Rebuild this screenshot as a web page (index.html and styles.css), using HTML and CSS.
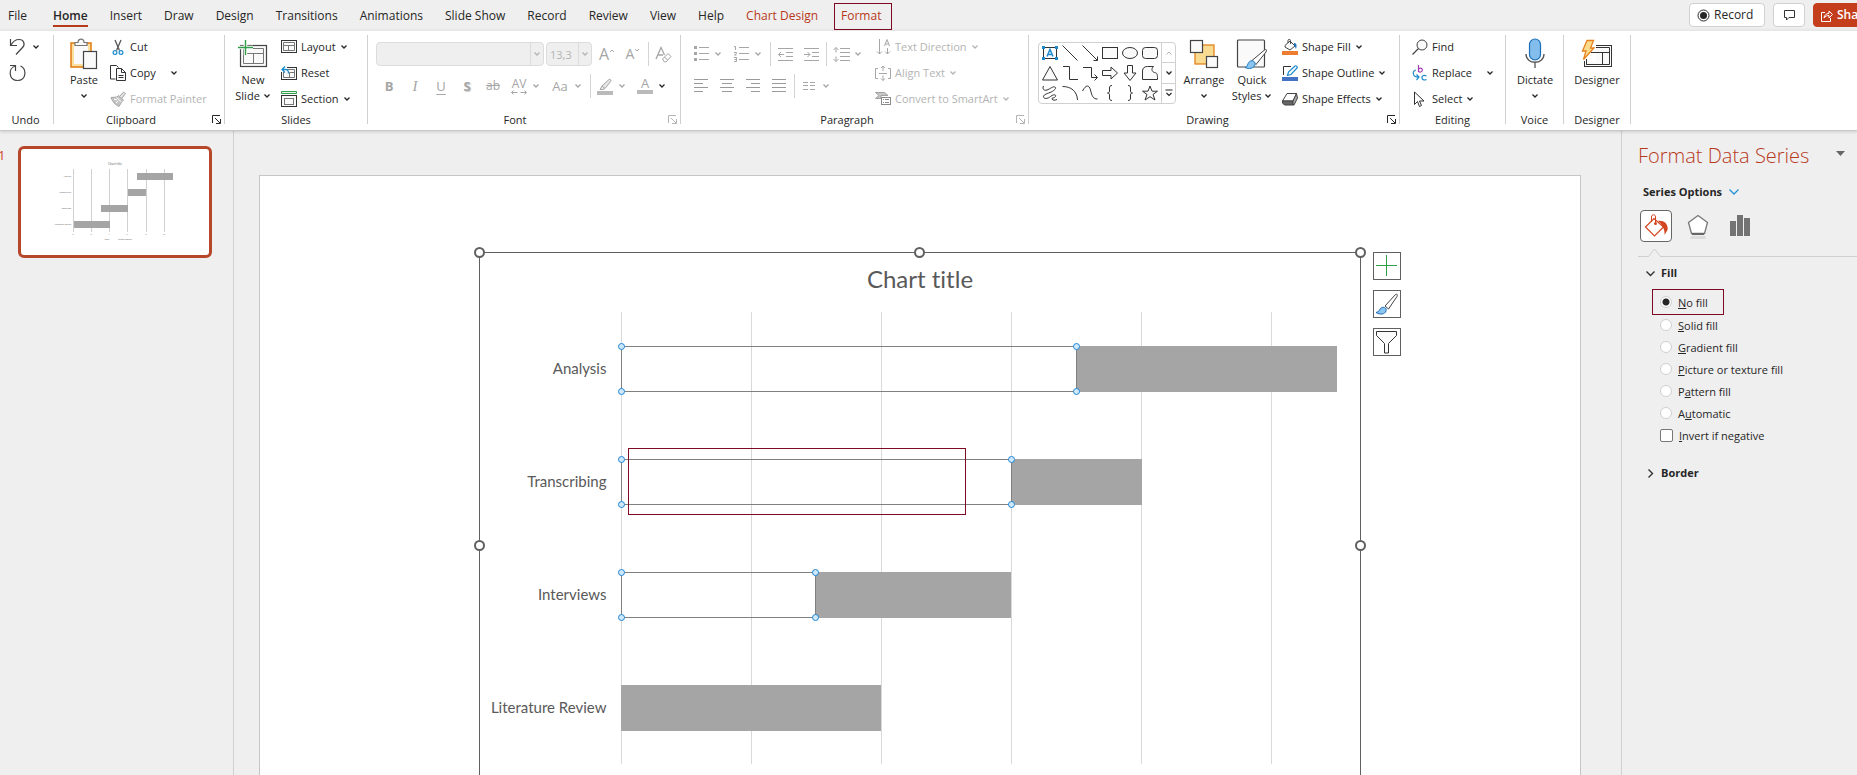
FILE: index.html
```html
<!DOCTYPE html>
<html lang="en">
<head>
    <meta charset="UTF-8">
    <meta name="viewport" content="width=device-width, initial-scale=1.0">
    <title>Presentation Editor</title>
    <link rel="stylesheet" href="styles.css">
</head>
<body>
    <!-- Shared symbols -->
    <svg class="symbols" aria-hidden="true">
        <symbol id="chev" viewBox="0 0 8 8"><path d="M1.5 2.5 4 5l2.5-2.5" fill="none" stroke="currentColor" stroke-width="1.3"/></symbol>
        <symbol id="launch" viewBox="0 0 9 9"><path d="M.5 8V.5H8M3 3l5 5M8.500 4v4.500H4" fill="none" stroke="currentColor"/></symbol>
    </svg>

    <!-- Tabs -->
    <header class="tab-bar">
        <nav class="tabs">
            <a href="#" class="tab tab-file">File</a>
            <a href="#" class="tab active">Home</a>
            <a href="#" class="tab">Insert</a>
            <a href="#" class="tab">Draw</a>
            <a href="#" class="tab">Design</a>
            <a href="#" class="tab">Transitions</a>
            <a href="#" class="tab">Animations</a>
            <a href="#" class="tab">Slide Show</a>
            <a href="#" class="tab">Record</a>
            <a href="#" class="tab">Review</a>
            <a href="#" class="tab">View</a>
            <a href="#" class="tab">Help</a>
            <a href="#" class="tab context">Chart Design</a>
            <a href="#" class="tab context marked">Format</a>
        </nav>
        <div class="window-actions">
            <button class="action-btn record-btn">
                <svg width="13" height="13" viewBox="0 0 13 13"><circle cx="6.500" cy="6.500" r="5.500" fill="none" stroke="#262626"/><circle cx="6.500" cy="6.500" r="3.500" fill="#262626"/></svg>
                Record
            </button>
            <button class="action-btn comment-btn" aria-label="Comments">
                <svg width="13" height="12" viewBox="0 0 13 12"><path d="M1.500 1.500h10v7H6L3.500 11V8.500h-2z" fill="none" stroke="#333"/></svg>
            </button>
            <button class="action-btn share-btn">
                <svg width="12" height="13" viewBox="0 0 12 13"><path d="M4 3.500H.5v9h9V9M3 9c.5-3 2-4.500 5-4.500V2l3.500 3.500L8 9V6.500C6 6.500 4.500 7 3 9z" fill="none" stroke="#fff"/></svg>
                Share
            </button>
        </div>
    </header>

    <!-- Ribbon -->
    <div class="ribbon">
        <section class="group group-undo">
            <div class="group-body">
                <div class="stack">
                    <button class="item" aria-label="Undo">
                        <svg width="17" height="18" viewBox="0 0 17 18"><path d="M1.500 1v6.500H8M2 7c2-3.500 4.500-5.500 8-5.500 5 0 6.500 5 3.500 8L7 16.500" fill="none" stroke="#444" stroke-width="1.200"/></svg>
                        <svg class="chev"><use href="#chev"/></svg>
                    </button>
                    <button class="item" aria-label="Repeat">
                        <svg width="17" height="18" viewBox="0 0 17 18"><path d="M1 1.500h5.500V7M6 2C-1 4.500-.5 16.500 8.500 16.500S18 5 11.500 2" fill="none" stroke="#444" stroke-width="1.200"/></svg>
                    </button>
                </div>
            </div>
            <h2 class="group-title">Undo</h2>
        </section>

        <section class="group group-clipboard">
            <div class="group-body">
                <button class="big">
                    <svg width="28" height="32" viewBox="0 0 28 32"><rect x="1" y="5" width="20" height="24" fill="#fbe0a0" stroke="#e07a10" stroke-width="1.500"/><rect x="4" y="8" width="14" height="18" fill="#fafafa"/><path d="M5 7.500V4.500h3C8 0 14 0 14 4.500h3v3z" fill="#fafafa" stroke="#777" stroke-width="1.200"/><rect x="13.500" y="13.500" width="13" height="17" fill="#fafafa" stroke="#444" stroke-width="1.200"/></svg>
                    <span>Paste</span>
                    <svg class="chev"><use href="#chev"/></svg>
                </button>
                <div class="stack">
                    <button class="item">
                        <svg width="16" height="16" viewBox="0 0 16 16"><path d="M5 1l4.500 10.500M11 1 6.500 11.500" fill="none" stroke="#555" stroke-width="1.300"/><circle cx="5" cy="13.500" r="1.900" fill="#fff" stroke="#1e8bcd" stroke-width="1.200"/><circle cx="11" cy="13.500" r="1.900" fill="#fff" stroke="#1e8bcd" stroke-width="1.200"/></svg>
                        Cut
                    </button>
                    <button class="item copy-btn">
                        <svg width="16" height="16" viewBox="0 0 16 16"><path d="M5.500 14H.5V.5h6l2 2" fill="none" stroke="#333"/><path d="M6.500 3.500h5l4 4v8h-9zM11.500 3.500v4h4M8.500 10.500h5M8.500 12.500h5" fill="#fafafa" stroke="#333"/></svg>
                        Copy
                        <svg class="chev"><use href="#chev"/></svg>
                    </button>
                    <button class="item" disabled>
                        <svg width="16" height="16" viewBox="0 0 16 16"><path d="M10 5l3.500-4 2 1.500L12 7" fill="#e3e3e3" stroke="#a6a6a6"/><path d="M1 6.500l6-.5 1.500-1.500 5 4.500-1.500 1.500-3 5C5 14 2.500 10.500 1 6.500z" fill="#c4c4c4" stroke="#a6a6a6"/><path d="M6.500 6.500l5 4.500M4 8l3 1M6 12l2-2" stroke="#fff"/></svg>
                        Format Painter
                    </button>
                </div>
            </div>
            <h2 class="group-title">Clipboard</h2>
            <button class="launcher" aria-label="Clipboard options"><svg><use href="#launch"/></svg></button>
        </section>

        <section class="group group-slides">
            <div class="group-body">
                <button class="big">
                    <svg width="32" height="30" viewBox="0 0 32 30"><rect x="3.500" y="6.500" width="26" height="21" fill="#fafafa" stroke="#444" stroke-width="1.200"/><path d="M6.500 9.500h20v15h-20zM6.500 14.500h20M16.500 14.500v10" fill="none" stroke="#777"/><path d="M1 8.500h15M8.500 1v15" stroke="#fff" stroke-width="3.500"/><path d="M1 8.500h15M8.500 1v15" stroke="#2f9e4b" stroke-width="1.400"/></svg>
                    <span>New<br>Slide <svg class="chev"><use href="#chev"/></svg></span>
                </button>
                <div class="stack">
                    <button class="item">
                        <svg width="16" height="14" viewBox="0 0 16 14"><rect x=".5" y=".5" width="15" height="12" fill="#fafafa" stroke="#333"/><path d="M2.500 2.500h11v8h-11zM2.500 5.500h11M7.500 5.500v5" fill="none" stroke="#777"/></svg>
                        Layout
                        <svg class="chev"><use href="#chev"/></svg>
                    </button>
                    <button class="item">
                        <svg width="16" height="14" viewBox="0 0 16 14"><rect x=".5" y="1.500" width="15" height="12" fill="#fafafa" stroke="#333"/><path d="M2.500 3.500h11v8h-11zM8.500 6.500h5M8.500 6.500v5" fill="none" stroke="#777"/><path d="M0 0h6v6H0z" fill="#fff"/><path d="M4 .5 1 3.500l3 3M1 3.500h3.500c2.500 0 3 1.500 3 4" fill="none" stroke="#1e8bcd" stroke-width="1.300"/></svg>
                        Reset
                    </button>
                    <button class="item">
                        <svg width="16" height="16" viewBox="0 0 16 16"><path d="M.5.5h15v2H.5z" fill="#eaf7ec" stroke="#2f9e4b"/><rect x=".5" y="4.500" width="15" height="11" fill="#fafafa" stroke="#333"/><rect x="3.500" y="7.500" width="9" height="6" fill="none" stroke="#777"/></svg>
                        Section
                        <svg class="chev"><use href="#chev"/></svg>
                    </button>
                </div>
            </div>
            <h2 class="group-title">Slides</h2>
        </section>

        <section class="group group-font">
            <div class="tool-rows">
                <div class="tool-row">
                    <div class="combo font-name"><input type="text" aria-label="Font name" disabled><svg class="chev"><use href="#chev"/></svg></div>
                    <div class="combo font-size"><input type="text" aria-label="Font size" value="13,3" disabled><svg class="chev"><use href="#chev"/></svg></div>
                    <button class="tool grow" aria-label="Increase font size" disabled>A<svg width="6" height="12" viewBox="0 0 6 12"><path d="M1 4l2-2 2 2" fill="none" stroke="#a6a6a6"/></svg></button>
                    <button class="tool shrink" aria-label="Decrease font size" disabled>A<svg width="6" height="12" viewBox="0 0 6 12"><path d="M1 1l2 2 2-2" fill="none" stroke="#a6a6a6"/></svg></button>
                    <span class="sep"></span>
                    <button class="tool" aria-label="Clear formatting" disabled><svg width="17" height="17" viewBox="0 0 17 17"><path d="M1 13 6 1.500 9.500 9M2.700 9H8" fill="none" stroke="#a6a6a6" stroke-width="1.300"/><path d="M7.500 13 13 7.500l3 3L11 16H9.500zM9.500 11l3 3" fill="#fff" stroke="#a6a6a6"/></svg></button>
                </div>
                <div class="tool-row">
                    <button class="tool bold" disabled>B</button>
                    <button class="tool italic" disabled>I</button>
                    <button class="tool underline" disabled>U</button>
                    <button class="tool shadow" disabled>S</button>
                    <button class="tool strike" disabled>ab</button>
                    <button class="tool spacing" disabled>AV<svg width="16" height="5" viewBox="0 0 16 5"><path d="M2.500.5l-2 2 2 2M.5 2.500h6M13.500.5l2 2-2 2M15.500 2.500h-6" fill="none" stroke="#a6a6a6"/></svg></button>
                    <svg class="chev muted"><use href="#chev"/></svg>
                    <button class="tool case" disabled>Aa</button>
                    <svg class="chev muted"><use href="#chev"/></svg>
                    <span class="sep"></span>
                    <button class="tool" aria-label="Highlight colour" disabled><svg width="16" height="17" viewBox="0 0 16 17"><path d="M5 8l7-6.500c1-.8 2.500.5 1.800 1.700L8 10.500zM5 8l-2 3.500h3l2-1" fill="#e6e6e6" stroke="#a6a6a6"/><path d="M0 13h16v4H0z" fill="#bababa"/></svg></button>
                    <svg class="chev muted"><use href="#chev"/></svg>
                    <button class="tool colour" disabled>A</button>
                    <svg class="chev"><use href="#chev"/></svg>
                </div>
            </div>
            <h2 class="group-title">Font</h2>
            <button class="launcher" aria-label="Font options" disabled><svg><use href="#launch"/></svg></button>
        </section>

        <section class="group group-paragraph">
            <div class="group-body">
                <div class="tool-rows">
                    <div class="tool-row">
                        <button class="tool" aria-label="Bullets" disabled><svg width="15" height="16" viewBox="0 0 15 16"><path d="M0 0h3v3H0zM0 6h3v3H0zM0 12h3v3H0z" fill="#a6a6a6"/><path d="M5 1.500h10M5 7.500h10M5 13.500h10" stroke="#a6a6a6"/></svg></button>
                        <svg class="chev muted"><use href="#chev"/></svg>
                        <button class="tool" aria-label="Numbering" disabled><svg width="15" height="16" viewBox="0 0 15 16"><path d="M0 .5h1.500V4M0 6.500h2.500v1L.5 9h2M0 11.500h2.500v4H0M.5 13.500h2" fill="none" stroke="#a6a6a6"/><path d="M5 1.500h10M5 7.500h10M5 13.500h10" stroke="#a6a6a6"/></svg></button>
                        <svg class="chev muted"><use href="#chev"/></svg>
                        <span class="sep"></span>
                        <button class="tool" aria-label="Decrease indent" disabled><svg width="15" height="15" viewBox="0 0 15 15"><path d="M0 1.500h15M8 5.500h7M8 9.500h7M0 13.500h15M3 5 .5 7.500 3 10M.5 7.500h5.500" fill="none" stroke="#a6a6a6"/></svg></button>
                        <button class="tool" aria-label="Increase indent" disabled><svg width="15" height="15" viewBox="0 0 15 15"><path d="M0 1.500h15M8 5.500h7M8 9.500h7M0 13.500h15M3.500 5 6 7.500 3.500 10M0 7.500h6" fill="none" stroke="#a6a6a6"/></svg></button>
                        <span class="sep"></span>
                        <button class="tool" aria-label="Line spacing" disabled><svg width="17" height="15" viewBox="0 0 17 15"><path d="M7 1.500h10M7 5.500h10M7 9.500h10M7 13.500h10M.5 3 3 .5 5.500 3M3 .5v5M.5 12 3 14.500 5.500 12M3 14.500v-5" fill="none" stroke="#a6a6a6"/></svg></button>
                        <svg class="chev muted"><use href="#chev"/></svg>
                    </div>
                    <div class="tool-row">
                        <button class="tool" aria-label="Align left" disabled><svg width="14" height="14" viewBox="0 0 14 14"><path d="M0 .5h14M0 4.500h9M0 8.500h14M0 12.500h9" stroke="#9a9a9a"/></svg></button>
                        <button class="tool" aria-label="Centre" disabled><svg width="14" height="14" viewBox="0 0 14 14"><path d="M0 .5h14M2 4.500h10M0 8.500h14M2 12.500h10" stroke="#9a9a9a"/></svg></button>
                        <button class="tool" aria-label="Align right" disabled><svg width="14" height="14" viewBox="0 0 14 14"><path d="M0 .5h14M5 4.500h9M0 8.500h14M5 12.500h9" stroke="#9a9a9a"/></svg></button>
                        <button class="tool" aria-label="Justify" disabled><svg width="14" height="14" viewBox="0 0 14 14"><path d="M0 .5h14M0 4.500h14M0 8.500h14M0 12.500h14" stroke="#9a9a9a"/></svg></button>
                        <span class="sep"></span>
                        <button class="tool" aria-label="Columns" disabled><svg width="12" height="14" viewBox="0 0 12 14"><path d="M0 3.500h5M7 3.500h5M0 6.500h5M7 6.500h5M0 10.500h5M7 10.500h5" stroke="#a6a6a6"/></svg></button>
                        <svg class="chev muted"><use href="#chev"/></svg>
                    </div>
                </div>
                <div class="stack">
                    <button class="item" disabled>
                        <svg width="16" height="18" viewBox="0 0 16 18"><path d="M4.500 1v15M2 13.500 4.500 16 7 13.500M12.500 10v6M10 13.500l2.500 2.500 2.500-2.500M9.500 8l2.500-6.500L14.500 8M10.300 6h3.500" fill="none" stroke="#a6a6a6"/></svg>
                        Text Direction
                        <svg class="chev"><use href="#chev"/></svg>
                    </button>
                    <button class="item" disabled>
                        <svg width="16" height="16" viewBox="0 0 16 16"><path d="M3 3.500H.5v10H3M13 3.500h2.500v10H13M4 8.500h8M8 1v5M6 3l2-2 2 2M8 15.500v-5M6 13.500l2 2 2-2" fill="none" stroke="#a6a6a6"/></svg>
                        Align Text
                        <svg class="chev"><use href="#chev"/></svg>
                    </button>
                    <button class="item" disabled>
                        <svg width="16" height="16" viewBox="0 0 16 16"><path d="M.5 1.500h9l3.500 3H6v3H.5L4 4.500z" fill="#c8c8c8" stroke="#a0a0a0"/><rect x="6.500" y="6.500" width="9" height="7" fill="#fff" stroke="#8a8a8a"/><path d="M8 8.500h1M10 8.500h4M8 11.500h1M10 11.500h4" stroke="#8a8a8a"/></svg>
                        Convert to SmartArt
                        <svg class="chev"><use href="#chev"/></svg>
                    </button>
                </div>
            </div>
            <h2 class="group-title">Paragraph</h2>
            <button class="launcher" aria-label="Paragraph options" disabled><svg><use href="#launch"/></svg></button>
        </section>

        <section class="group group-drawing">
            <div class="group-body">
                <div class="gallery">
                    <div class="shapes">
                        <svg viewBox="0 0 16 16"><rect x="1.500" y="2.500" width="13" height="11" fill="#fff" stroke="#333"/><path d="M0 1h3v3H0zM13 1h3v3h-3zM0 12h3v3H0zM13 12h3v3h-3z" fill="#1e8bcd"/><path d="M5 11.500 8 4.500l3 7M6 9.500h4" fill="none" stroke="#1e8bcd" stroke-width="1.500"/></svg>
                        <svg viewBox="0 0 16 16"><path d="M.5.500l15 15" stroke="#333"/></svg>
                        <svg viewBox="0 0 16 16"><path d="M.5.500l15 15M15.500 11.500v4h-4" fill="none" stroke="#333"/></svg>
                        <svg viewBox="0 0 16 16"><rect x=".5" y="2.500" width="15" height="11" fill="#fafafa" stroke="#333"/></svg>
                        <svg viewBox="0 0 16 16"><ellipse cx="8" cy="8" rx="7.500" ry="5.500" fill="#fafafa" stroke="#333"/></svg>
                        <svg viewBox="0 0 16 16"><rect x=".5" y="2.500" width="15" height="11" rx="3" fill="#fafafa" stroke="#333"/></svg>
                        <svg viewBox="0 0 16 16"><path d="M8 1.500 15.500 15H.5z" fill="#fafafa" stroke="#333"/></svg>
                        <svg viewBox="0 0 16 16"><path d="M1 1.500h6.500v13H16" fill="none" stroke="#333"/></svg>
                        <svg viewBox="0 0 16 16"><path d="M1 2.500h8.500v10H15M12.500 9.500l3 3-3 3" fill="none" stroke="#333"/></svg>
                        <svg viewBox="0 0 16 16"><path d="M.5 5.500H9v-3.500l6.500 6-6.500 6v-3.500H.5z" fill="#fafafa" stroke="#333"/></svg>
                        <svg viewBox="0 0 16 16"><path d="M5.500.5h5V8h3.500l-6 7.500L2 8h3.500z" fill="#fafafa" stroke="#333"/></svg>
                        <svg viewBox="0 0 16 16"><path d="M.5 14.500V6c0-3 2-4.500 5-4.500h6c-3 3-1 5.500 1 6 3 .5 3 2 3 7z" fill="#fafafa" stroke="#333"/></svg>
                        <svg viewBox="0 0 16 16"><path d="M1.500 1C0 4 2 6 5 5s6-4 8-3-1 4-5 5.500S1 10 1.500 12s4 2 7-.5 6-2 5 0-4 1-3.500 2.500 3 1.500 5 .5" fill="none" stroke="#333"/></svg>
                        <svg viewBox="0 0 16 16"><path d="M.5 1.500C9 1.500 15 6 15.500 15" fill="none" stroke="#333"/></svg>
                        <svg viewBox="0 0 16 16"><path d="M.5 6C4-.5 7-.5 8.500 5c1.500 6 2.500 9 7 9" fill="none" stroke="#333"/></svg>
                        <svg viewBox="0 0 16 16"><path d="M10 .5c-2 0-2.500 1-2.500 2.500V6c0 1.300-.5 2-2 2 1.500 0 2 .7 2 2v3c0 1.500.5 2.500 2.500 2.500" fill="none" stroke="#333"/></svg>
                        <svg viewBox="0 0 16 16"><path d="M6 .5c2 0 2.500 1 2.500 2.500V6c0 1.300.5 2 2 2-1.500 0-2 .7-2 2v3c0 1.500-.5 2.500-2.500 2.500" fill="none" stroke="#333"/></svg>
                        <svg viewBox="0 0 16 16"><path d="M8 1l2 5.200h5.500L11 9.500l2 5.500-5-3.300L3 15l2-5.500L.5 6.200H6z" fill="#fafafa" stroke="#333"/></svg>
                    </div>
                    <div class="gallery-scroll">
                        <button aria-label="Previous row" disabled><svg width="8" height="8" viewBox="0 0 8 8"><path d="M1.500 5.500 4 3l2.500 2.500" fill="none" stroke="currentColor"/></svg></button>
                        <button aria-label="Next row"><svg class="chev"><use href="#chev"/></svg></button>
                        <button aria-label="More shapes"><svg width="8" height="8" viewBox="0 0 8 8"><path d="M.5 1h7M1.500 4 4 6.500 6.500 4" fill="none" stroke="currentColor" stroke-width="1.200"/></svg></button>
                    </div>
                </div>
                <button class="big">
                    <svg width="30" height="30" viewBox="0 0 30 30"><rect x="6" y="6" width="19" height="19" fill="#f9dc92" stroke="#e07a10" stroke-width="1.200"/><rect x="1.500" y="1.500" width="12" height="12" fill="#fafafa" stroke="#444" stroke-width="1.200"/><rect x="17.500" y="17.500" width="11" height="11" fill="#fafafa" stroke="#444" stroke-width="1.200"/></svg>
                    <span>Arrange</span>
                    <svg class="chev"><use href="#chev"/></svg>
                </button>
                <button class="big">
                    <svg width="32" height="31" viewBox="0 0 32 31"><rect x="1.500" y="1.500" width="27" height="27" rx="1" fill="#fafafa" stroke="#444" stroke-width="1.200"/><path d="M16 22 28.500 11.500c2-1 2.500 0 1.500 2L20 26z" fill="#fff" stroke="#444"/><path d="M9 29c3 0 2-5 5.500-6.500 2.500-1 5 1 4.500 3.500C18 30 13 31 9 29z" fill="#8cc4f0" stroke="#1e78bd"/></svg>
                    <span>Quick<br>Styles <svg class="chev"><use href="#chev"/></svg></span>
                </button>
                <div class="stack">
                    <button class="item">
                        <svg width="16" height="16" viewBox="0 0 16 16"><path d="M3 6.500 8 2l5 5-5 4-5-3zM6 4V1.500c0-1.500 2.500-1.500 2.500 0V5" fill="#fafafa" stroke="#444"/><path d="M12 4c3 0 3 3 2 6-1-2-1-3-2-4z" fill="#1e78bd"/><path d="M0 12h16v4H0z" fill="#ed7d31"/></svg>
                        Shape Fill
                        <svg class="chev"><use href="#chev"/></svg>
                    </button>
                    <button class="item">
                        <svg width="16" height="16" viewBox="0 0 16 16"><path d="M9 1.500H1.500V10" fill="none" stroke="#333"/><path d="M5.500 10.500l1-3.500 6.500-6c1-.8 3 1 2 2L9 9.500z" fill="#fff" stroke="#1e8bcd" stroke-width="1.200"/><path d="M0 12h16v4H0z" fill="#4472c4"/></svg>
                        Shape Outline
                        <svg class="chev"><use href="#chev"/></svg>
                    </button>
                    <button class="item">
                        <svg width="16" height="14" viewBox="0 0 16 14"><path d="M.5 9 5 1.500h9.500L11 9z" fill="#fff" stroke="#444"/><path d="M.5 9H11v4H2.500L.5 11z" fill="#666" stroke="#444"/><path d="M11 9l3.500-7.500 1 4.500L12 13h-1z" fill="#aaa" stroke="#444"/></svg>
                        Shape Effects
                        <svg class="chev"><use href="#chev"/></svg>
                    </button>
                </div>
            </div>
            <h2 class="group-title">Drawing</h2>
            <button class="launcher" aria-label="Drawing options"><svg><use href="#launch"/></svg></button>
        </section>

        <section class="group group-editing">
            <div class="group-body">
                <div class="stack">
                    <button class="item">
                        <svg width="16" height="16" viewBox="0 0 16 16"><circle cx="10" cy="6" r="5" fill="#fafafa" stroke="#444"/><path d="M6.500 9.500.5 15.500" stroke="#444" stroke-width="1.200"/></svg>
                        Find
                    </button>
                    <button class="item replace-btn">
                        <svg width="16" height="16" viewBox="0 0 16 16"><path d="M6.500 0v7M6.500 4c3-2 4.500 0 3.500 2-.5 1-2 1.500-3.500.5" fill="none" stroke="#a33bb0" stroke-width="1.200"/><path d="M14.500 11c-3-1.500-5 0-4.500 2s2.500 2.500 4.500 1.500M4 5C0 6 0 12 6.500 12M4.500 9.500l2.500 2.500-2.500 3" fill="none" stroke="#1e8bcd" stroke-width="1.200"/></svg>
                        Replace
                        <svg class="chev"><use href="#chev"/></svg>
                    </button>
                    <button class="item">
                        <svg width="16" height="16" viewBox="0 0 16 16"><path d="M2.500 1v12.500l3-3 2 5 2-1-2-4.500h4.500z" fill="#fff" stroke="#333"/></svg>
                        Select
                        <svg class="chev"><use href="#chev"/></svg>
                    </button>
                </div>
            </div>
            <h2 class="group-title">Editing</h2>
        </section>

        <section class="group group-voice">
            <div class="group-body">
                <button class="big">
                    <svg width="20" height="32" viewBox="0 0 20 32"><path d="M1 16c0 11 18 11 18 0M10 24.500V30" fill="none" stroke="#555" stroke-width="1.300"/><rect x="4.500" y="1" width="11" height="21" rx="5.500" fill="#83bdec" stroke="#1a6fb8" stroke-width="1.200"/></svg>
                    <span>Dictate</span>
                    <svg class="chev"><use href="#chev"/></svg>
                </button>
            </div>
            <h2 class="group-title">Voice</h2>
        </section>

        <section class="group group-designer">
            <div class="group-body">
                <button class="big">
                    <svg width="32" height="30" viewBox="0 0 32 30"><rect x="3.500" y="6.500" width="27" height="21" fill="#fafafa" stroke="#333"/><path d="M5.500 8.500h23v17h-23zM5.500 13.500h23M21.500 13.500v12" fill="none" stroke="#333"/><path d="M1 4h14v18H1z" fill="#fff"/><path d="M3.500 22v5.500H15M5.500 20v5.500H15M10 13.500h6" fill="none" stroke="#333"/><path d="M6 1.500h6.500L9.500 9H13L2.500 20.500 5 12H1.500z" fill="#fbdc8e" stroke="#e8801c" stroke-width="1.300"/></svg>
                    <span>Designer</span>
                </button>
            </div>
            <h2 class="group-title">Designer</h2>
        </section>
    </div>

    <div class="workspace">
        <!-- Slide thumbnails -->
        <aside class="thumbs">
            <span class="thumb-number">1</span>
            <button class="thumb" aria-label="Slide 1">
                <svg viewBox="0 0 188 106">
                    <path d="M52.500 20v63M70.500 20v63M88.500 20v63M106.500 20v63M125.500 20v63M143.500 20v63" stroke="#d0d0d0"/>
                    <path d="M116 24h36v7h-36zM107 40h18v7h-18zM80 56h27v7H80zM53 72h36v7H53z" fill="#a5a5a5"/>
                    <g fill="#555" font-size="2" text-anchor="end">
                        <text x="50" y="28">Analysis</text>
                        <text x="50" y="44">Transcribing</text>
                        <text x="50" y="60">Interviews</text>
                        <text x="50" y="76">Literature Review</text>
                    </g>
                    <g fill="#555" font-size="2" text-anchor="middle">
                        <text x="94" y="16" font-size="3">Chart title</text>
                        <text x="52" y="86">0</text><text x="70" y="86">2</text><text x="88" y="86">4</text>
                        <text x="106" y="86">6</text><text x="125" y="86">8</text><text x="143" y="86">10</text>
                        <text x="86" y="91">Start</text><text x="104" y="91">Length (weeks)</text>
                    </g>
                </svg>
            </button>
        </aside>

        <!-- Slide -->
        <main class="canvas">
            <div class="slide">
                <div class="chart">
                    <h1 class="chart-title">Chart title</h1>
                    <div class="plot">
                        <div class="gridlines">
                            <span></span><span></span><span></span><span></span><span></span><span class="half"></span>
                        </div>
                        <div class="rows">
                            <div class="row">
                                <span class="row-label">Analysis</span>
                                <div class="track">
                                    <div class="start" style="width: 63.636%"><i></i><i></i><i></i><i></i></div>
                                    <div class="length" style="width: 36.364%"></div>
                                </div>
                            </div>
                            <div class="row">
                                <span class="row-label">Transcribing</span>
                                <div class="track">
                                    <div class="start" style="width: 54.545%"><i></i><i></i><i></i><i></i><div class="callout"></div></div>
                                    <div class="length" style="width: 18.182%"></div>
                                </div>
                            </div>
                            <div class="row">
                                <span class="row-label">Interviews</span>
                                <div class="track">
                                    <div class="start" style="width: 27.273%"><i></i><i></i><i></i><i></i></div>
                                    <div class="length" style="width: 27.273%"></div>
                                </div>
                            </div>
                            <div class="row">
                                <span class="row-label">Literature Review</span>
                                <div class="track">
                                    <div class="length" style="width: 36.364%"></div>
                                </div>
                            </div>
                        </div>
                    </div>

                    <span class="handle top left"></span>
                    <span class="handle top center"></span>
                    <span class="handle top right"></span>
                    <span class="handle middle left"></span>
                    <span class="handle middle right"></span>

                    <div class="chart-tools">
                        <button aria-label="Chart elements"><svg width="22" height="22" viewBox="0 0 22 22"><path d="M0 10.500h21M10.500 0v21" stroke="#2f9e4b"/></svg></button>
                        <button aria-label="Chart styles"><svg width="24" height="24" viewBox="0 0 24 24"><path d="M10 14 20 3c1.500-1.500 3-1 2 1.500L13.500 17z" fill="#fff" stroke="#444"/><path d="M1 20.500c3.500 0 3-4 6-5 2.500-.8 5 1 4 3.500-1 3.500-6 4-10 1.500z" fill="#8cc4f0" stroke="#1e6fb5"/></svg></button>
                        <button aria-label="Chart filters"><svg width="22" height="23" viewBox="0 0 22 23"><path d="M.5.500h20v4l-8 8v9.500h-4v-9.500l-8-8z" fill="#fafafa" stroke="#333"/></svg></button>
                    </div>
                </div>
            </div>
        </main>

        <!-- Format pane -->
        <aside class="pane">
            <div class="pane-head">
                <h2>Format Data Series</h2>
                <button aria-label="Pane options"><svg width="9" height="5" viewBox="0 0 9 5"><path d="M0 0h9L4.500 5z" fill="#666"/></svg></button>
            </div>
            <button class="series-options">Series Options <svg width="10" height="6" viewBox="0 0 10 6"><path d="M.5.500 5 5 9.500.500" fill="none" stroke="#2492d6" stroke-width="1.300"/></svg></button>
            <div class="pane-icons">
                <button class="selected" aria-label="Fill and line"><svg width="24" height="24" viewBox="0 0 24 24"><path d="M1.500 13 10 4.500l9.500 8.500-9 9z" fill="#fff" stroke="#d2451e" stroke-width="1.200"/><path d="M7.500 8V3c0-3 4-3 4 0v6" fill="none" stroke="#d2451e"/><circle cx="11.500" cy="9.500" r="1.500" fill="#d2451e"/><path d="M14 7c6-1 10.500 3 9.500 9l-3 5c.5-5-1.500-10-6.500-14z" fill="#d2451e"/></svg></button>
                <button aria-label="Effects"><svg width="22" height="25" viewBox="0 0 22 25"><path d="M11 1.500 20.500 8.500 17.500 19.500H4.500L1.500 8.500z" fill="#fff" stroke="#777" stroke-width="1.300"/><path d="M5 20h12" stroke="#666" stroke-width="2"/><path d="M4 22l-1 3h16l-1-3z" fill="#dcdcdc"/></svg></button>
                <button aria-label="Series options"><svg width="20" height="22" viewBox="0 0 20 22"><path d="M0 6h6v15H0zM7 0h6v21H7zM14 3h6v18h-6z" fill="#737373"/></svg></button>
            </div>
            <svg class="pane-notch" width="16" height="9" viewBox="0 0 16 9"><path d="M1 9 7.500 1 14 9" fill="#efefef" stroke="#cfcfcf"/></svg>
            <div class="pane-body">
                <button class="section-head"><svg width="9" height="9" viewBox="0 0 9 9"><path d="M.5 2.500l4 4 4-4" fill="none" stroke="#333" stroke-width="1.400"/></svg>Fill</button>
                <div class="options">
                    <label class="option marked"><input type="radio" name="fill" checked><span><u>N</u>o fill</span></label>
                    <label class="option"><input type="radio" name="fill"><span><u>S</u>olid fill</span></label>
                    <label class="option"><input type="radio" name="fill"><span><u>G</u>radient fill</span></label>
                    <label class="option"><input type="radio" name="fill"><span><u>P</u>icture or texture fill</span></label>
                    <label class="option"><input type="radio" name="fill"><span>P<u>a</u>ttern fill</span></label>
                    <label class="option"><input type="radio" name="fill"><span>A<u>u</u>tomatic</span></label>
                    <label class="option"><input type="checkbox"><span><u>I</u>nvert if negative</span></label>
                </div>
                <button class="section-head"><svg width="9" height="9" viewBox="0 0 9 9"><path d="M2.500.5l4 4-4 4" fill="none" stroke="#333" stroke-width="1.400"/></svg>Border</button>
            </div>
        </aside>
    </div>
</body>
</html>
```
FILE: styles.css
```css
* {
    box-sizing: border-box;
}

body {
    margin: 0;
    height: 100vh;
    overflow: hidden;
    display: flex;
    flex-direction: column;
    background: #efefef;
    color: #262626;
    font-family: "Open Sans", "Noto Sans", sans-serif;
    font-size: 11px;
    line-height: 16px;
}

h1, h2 {
    margin: 0;
    font-weight: 400;
}

button, input {
    font: inherit;
    color: inherit;
    margin: 0;
}

button {
    display: flex;
    align-items: center;
    background: none;
    border: none;
    padding: 0;
    white-space: nowrap;
}

button:disabled {
    color: #b4b4b4;
}

svg {
    flex: none;
}

.symbols {
    display: none;
}

.chev {
    width: 8px;
    height: 8px;
}

/* Tabs */
.tab-bar {
    display: flex;
    justify-content: space-between;
    height: 30px;
    flex: none;
}

.tabs {
    display: flex;
    gap: 10px;
    padding-left: 2px;
    padding-top: 3px;
}

.tab {
    color: #262626;
    text-decoration: none;
    font-size: 12px;
    line-height: 26px;
    height: 27px;
    padding: 0 6px;
    white-space: nowrap;
}

.tab-file {
    margin-right: 4px;
}

.tab.active {
    font-weight: 600;
    background: linear-gradient(#b7391c, #b7391c) center 22px / calc(100% - 12px) 2px no-repeat;
}

.tab.context {
    color: #b7391c;
}

.marked {
    border: 1px solid #7d0a22;
}

.tab.marked {
    padding-right: 10px;
    line-height: 24px;
}

.window-actions {
    display: flex;
    gap: 8px;
    padding-top: 3px;
    margin-right: -36px;
}

.action-btn {
    height: 24px;
    gap: 4px;
    padding: 0 7px;
    background: #fff;
    border: 1px solid #d0d0d0;
    border-radius: 4px;
    font-size: 12px;
    font-weight: 600;
}

.record-btn {
    width: 76px;
    font-weight: 400;
}

.comment-btn {
    width: 32px;
    justify-content: center;
}

.share-btn {
    width: 80px;
    background: #c43e1c;
    border-color: #c43e1c;
    color: #fff;
}

/* Ribbon */
.ribbon {
    display: flex;
    flex: none;
    height: 101px;
    background: #fff;
    border-top: 1px solid #e6e6e6;
    border-bottom: 1px solid #c8c8c8;
    box-shadow: 0 1px 3px rgba(0, 0, 0, 0.15);
    padding: 4px 0 6px;
    z-index: 1;
}

.group {
    position: relative;
    flex: none;
    display: flex;
    flex-direction: column;
    justify-content: space-between;
    border-right: 1px solid #d0d0d0;
}

.group-body {
    display: flex;
    align-items: flex-start;
}

.group-title {
    font-size: 11px;
    line-height: 14px;
    padding-right: 22px;
    margin-bottom: -3px;
    text-align: center;
}

.group-undo { width: 54px; padding-left: 9px; }
.group-undo .group-title { padding-right: 11px; }
.group-clipboard { width: 171px; padding-left: 6px; }
.group-slides { width: 143px; padding-left: 4px; }
.group-slides .group-title { padding-right: 4px; }
.group-font { width: 313px; padding-left: 8px; }
.group-font .group-title { padding-right: 26px; }
.group-paragraph { width: 348px; padding-left: 7px; }
.group-drawing { width: 371px; padding-left: 9px; }
.group-editing { width: 106px; padding-left: 12px; }
.group-editing .group-title { padding-right: 12px; }
.group-voice { width: 58px; padding-left: 5px; }
.group-voice .group-title { padding-right: 5px; }
.group-designer { width: 67px; padding-left: 9px; }
.group-designer .group-title { padding-right: 9px; }

.launcher {
    position: absolute;
    right: 3px;
    bottom: 0;
}

.launcher svg {
    width: 9px;
    height: 9px;
}

.big {
    flex-direction: column;
    width: 48px;
    padding-top: 2px;
}

.big > svg:first-child {
    height: 34px;
}

.big span {
    line-height: 16px;
    margin-top: 1px;
    text-align: center;
}

.big > .chev {
    margin-top: 4px;
}

.stack {
    display: flex;
    flex-direction: column;
    margin: -1px 0 0 2px;
}

.item {
    gap: 4px;
    height: 26px;
}

.group-undo .stack,
.group-editing .stack {
    margin-left: 0;
}

.group-undo .chev {
    margin-left: 2px;
}

.copy-btn .chev,
.replace-btn .chev {
    margin-left: 10px;
}

.group-drawing .stack {
    margin-left: 6px;
}

.group-slides .stack {
    margin-left: 4px;
}

.tool-rows {
    display: flex;
    flex-direction: column;
    gap: 8px;
    padding-top: 7px;
}

.group-paragraph .tool-rows {
    width: 185px;
}

.tool-row {
    display: flex;
    align-items: center;
    height: 24px;
}

.tool-row > .chev {
    margin-right: 6px;
}

.tool {
    width: 26px;
    height: 24px;
    justify-content: center;
    font-size: 13px;
}

.tool:disabled,
.muted {
    color: #a6a6a6;
}

.sep {
    width: 1px;
    height: 24px;
    margin: 0 1px 0 2px;
    background: #d4d4d4;
}

.combo {
    display: flex;
    align-items: center;
    height: 24px;
    margin-right: 2px;
    background: #efefef;
    border: 1px solid #dcdcdc;
    border-radius: 4px;
    color: #b4b4b4;
}

.combo input {
    flex: 1;
    min-width: 0;
    height: 22px;
    padding: 0 3px;
    background: none;
    border: none;
    border-right: 1px solid #dcdcdc;
}

.combo .chev {
    margin: 0 2px;
}

.font-name {
    width: 168px;
}

.font-size {
    width: 46px;
}

.tool.grow {
    font-size: 16px;
}

.tool.shrink {
    font-size: 14px;
}

.bold {
    font-weight: 700;
}

.italic {
    font-family: "Liberation Serif", serif;
    font-style: italic;
    font-size: 15px;
}

.underline {
    text-decoration: underline;
    text-underline-offset: 3px;
}

.shadow {
    font-weight: 700;
    text-shadow: 1px 1px 1px #ccc;
}

.strike {
    text-decoration: line-through;
    font-size: 12px;
}

.spacing {
    flex-direction: column;
    font-size: 12px;
    line-height: 12px;
}

.case {
    width: 28px;
}

.colour {
    line-height: 14px;
    background: linear-gradient(#bababa, #bababa) center bottom 4px / 16px 4px no-repeat;
    padding-bottom: 7px;
}

.gallery {
    display: flex;
    width: 138px;
    height: 62px;
    margin: 7px 4px 0 0;
    border: 1px solid #d0d0d0;
    border-radius: 4px;
}

.shapes {
    flex: 1;
    display: grid;
    grid-template-columns: repeat(6, 20px);
    grid-template-rows: repeat(3, 20px);
    padding-left: 1px;
}

.shapes svg {
    width: 16px;
    height: 16px;
    margin: 2px;
}

.gallery-scroll {
    display: flex;
    flex-direction: column;
    border-left: 1px solid #d0d0d0;
}

.gallery-scroll button {
    flex: 1;
    width: 13px;
    justify-content: center;
}

.gallery-scroll button + button {
    border-top: 1px solid #d0d0d0;
}

/* Workspace */
.workspace {
    flex: 1;
    display: flex;
    min-height: 0;
}

.thumbs {
    flex: none;
    display: flex;
    align-items: flex-start;
    width: 234px;
    padding-top: 15px;
    border-right: 1px solid #d0d0d0;
}

.thumb-number {
    width: 18px;
    margin-left: -2px;
    margin-right: 2px;
    padding-top: 1px;
    font-size: 13px;
    color: #d2451e;
}

.thumb {
    width: 194px;
    background: #fff;
    border: 3px solid #b7472a;
    border-radius: 6px;
}

.thumb svg {
    width: 100%;
}

.canvas {
    flex: 1;
    min-width: 0;
    padding: 44px 40px 0 25px;
    overflow: hidden;
}

.slide {
    height: 744px;
    padding-top: 76px;
    background: #fff;
    border: 1px solid #c6c6c6;
}

/* Chart */
.chart {
    position: relative;
    width: 66.750%;
    height: 588px;
    margin: 0 auto;
    border: 1px solid #606060;
    font-family: Lato, "Open Sans", sans-serif;
    font-variant-ligatures: none;
    color: #595959;
}

.chart-title {
    font-size: 24px;
    line-height: 52px;
    padding-bottom: 7px;
    text-align: center;
}

.plot {
    display: grid;
    padding-right: 23px;
}

.gridlines,
.rows {
    grid-area: 1 / 1;
}

.gridlines {
    display: flex;
    margin-left: 141px;
}

.gridlines span {
    flex: 2;
    border-left: 1px solid #d9d9d9;
}

.gridlines .half {
    flex: 1;
}

.row {
    display: flex;
    align-items: center;
    height: 113px;
}

.row-label {
    width: 141px;
    padding: 0 15px 2px 0;
    text-align: right;
    font-size: 15px;
    white-space: nowrap;
}

.track {
    flex: 1;
    display: flex;
    height: 46px;
}

.length {
    background: #a5a5a5;
}

.start {
    position: relative;
    border: 1px solid #808080;
}

.start i {
    position: absolute;
    width: 7px;
    height: 7px;
    background: #cfe8fb;
    border: 1px solid #1e86d4;
    border-radius: 50%;
}

.start i:nth-child(1) { left: -4px; top: -4px; }
.start i:nth-child(2) { right: -4px; top: -4px; }
.start i:nth-child(3) { left: -4px; bottom: -4px; }
.start i:nth-child(4) { right: -4px; bottom: -4px; }

.callout {
    position: absolute;
    top: -12px;
    bottom: -11px;
    left: 6px;
    right: 45px;
    border: 1px solid #7d0a22;
}

.handle {
    position: absolute;
    width: 11px;
    height: 11px;
    background: #fff;
    border: 2px solid #606060;
    border-radius: 50%;
}

.handle.top { top: -6px; }
.handle.middle { top: calc(50% - 6px); }
.handle.left { left: -6px; }
.handle.center { left: calc(50% - 6px); }
.handle.right { right: -6px; }

.chart-tools {
    position: absolute;
    top: -1px;
    left: calc(100% + 13px);
    display: flex;
    flex-direction: column;
    gap: 10px;
}

.chart-tools button {
    width: 28px;
    height: 28px;
    justify-content: center;
    background: #fff;
    border: 1px solid #606060;
}

/* Format pane */
.pane {
    flex: none;
    width: 236px;
    padding: 12px 0 0 16px;
    border-left: 1px solid #d0d0d0;
}

.pane-head {
    display: flex;
    justify-content: space-between;
    padding-right: 12px;
}

.pane-head h2 {
    color: #b7391c;
    font-size: 20px;
    font-weight: 300;
    line-height: 26px;
    white-space: nowrap;
}

.pane-head button {
    height: 20px;
}

.series-options {
    gap: 7px;
    margin: 15px 0 10px 5px;
    font-weight: 700;
}

.pane-icons {
    display: flex;
    gap: 10px;
    padding-left: 2px;
}

.pane-icons button {
    width: 32px;
    height: 32px;
    justify-content: center;
}

.pane-icons .selected {
    background: #fff;
    border: 1px solid #666;
    border-radius: 4px;
}

.pane-notch {
    display: block;
    margin: 6px 0 -1px 9px;
    position: relative;
}

.pane-body {
    border-top: 1px solid #cfcfcf;
    padding-top: 8px;
}

.section-head {
    gap: 6px;
    margin-left: 8px;
    font-weight: 700;
}

.options {
    display: flex;
    flex-direction: column;
    align-items: flex-start;
    padding: 8px 0 18px 14px;
}

.option {
    display: flex;
    align-items: center;
    gap: 6px;
    height: 22px;
    padding: 0 7px;
    border: 1px solid transparent;
}

.option.marked {
    height: 26px;
    padding: 2px 15px 0 7px;
    border-color: #7d0a22;
}

.option input {
    appearance: none;
    width: 12px;
    height: 12px;
    margin-top: -2px;
    background: #fff;
    border: 1px solid #d0d0d0;
    border-radius: 50%;
}

.option input:checked {
    background: radial-gradient(#262626 0 3px, #fff 4px);
}

.option input[type="checkbox"] {
    width: 13px;
    height: 13px;
    border-color: #777;
    border-radius: 2px;
}
```
